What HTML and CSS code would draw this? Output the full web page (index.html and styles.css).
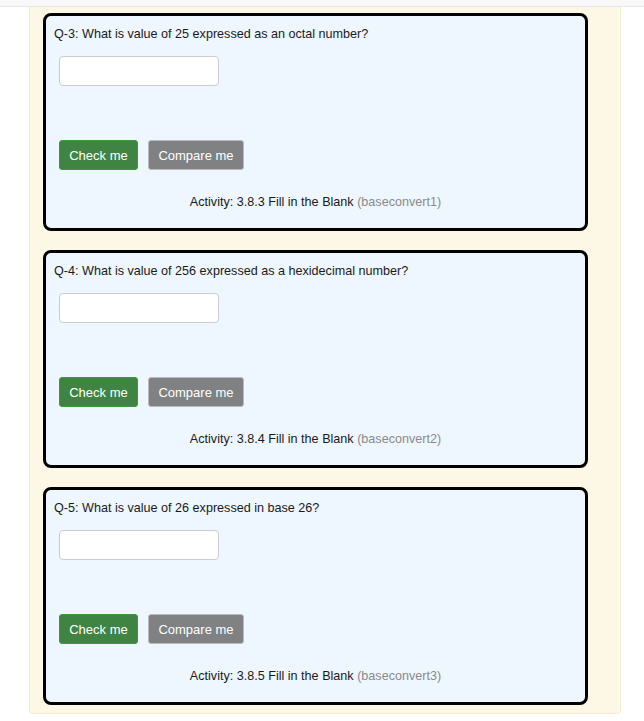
FILE: index.html
```html
<!DOCTYPE html>
<html>
<head>
<meta charset="utf-8">
<link rel="stylesheet" href="styles.css">
</head>
<body>
<div class="topbar"></div>
<div class="container">
  <div class="card">
    <p class="question">Q-3: What is value of 25 expressed as an octal number?</p>
    <input class="blank" type="text">
    <div class="feedback"></div>
    <div class="buttons">
      <button class="btn btn-check">Check me</button>
      <button class="btn btn-compare">Compare me</button>
    </div>
    <p class="activity">Activity: 3.8.3 Fill in the Blank <span class="id">(baseconvert1)</span></p>
  </div>
  <div class="card">
    <p class="question">Q-4: What is value of 256 expressed as a hexidecimal number?</p>
    <input class="blank" type="text">
    <div class="feedback"></div>
    <div class="buttons">
      <button class="btn btn-check">Check me</button>
      <button class="btn btn-compare">Compare me</button>
    </div>
    <p class="activity">Activity: 3.8.4 Fill in the Blank <span class="id">(baseconvert2)</span></p>
  </div>
  <div class="card last">
    <p class="question">Q-5: What is value of 26 expressed in base 26?</p>
    <input class="blank" type="text">
    <div class="feedback"></div>
    <div class="buttons">
      <button class="btn btn-check">Check me</button>
      <button class="btn btn-compare">Compare me</button>
    </div>
    <p class="activity">Activity: 3.8.5 Fill in the Blank <span class="id">(baseconvert3)</span></p>
  </div>
</div>
</body>
</html>
```
FILE: styles.css
```css
html, body {
  margin: 0;
  padding: 0;
  background: #ffffff;
  font-family: "Liberation Sans", Arial, sans-serif;
  color: #1a1a1a;
}
.topbar {
  height: 6px;
  background: #f8f8f8;
  border-bottom: 1px solid #e7e7e7;
}
.container {
  margin-left: 29px;
  width: 545px;
  padding: 6px 32px 8px 13px;
  background: #fdf8e6;
  border: 1px solid #f7ecd0;
  border-top: none;
  border-radius: 0 0 4px 4px;
}
.card {
  box-sizing: border-box;
  height: 218px;
  border: 3px solid #000;
  border-radius: 8px;
  background: #eef6ff;
  padding: 10px 8px 16px 8px;
  margin-bottom: 19px;
  display: flex;
  flex-direction: column;
  align-items: flex-start;
}
.card.last {
  margin-bottom: 0;
}
.question {
  margin: 0;
  font-size: 12.6px;
  line-height: 17px;
}
.blank {
  box-sizing: border-box;
  width: 160px;
  height: 30px;
  margin: 13px 0 0 5px;
  border: 1px solid #cccccc;
  border-radius: 4px;
  background: #ffffff;
  padding: 0 8px;
}
.feedback {
  height: 54px;
}
.buttons {
  display: flex;
  gap: 10px;
  margin-left: 5px;
}
.btn {
  box-sizing: border-box;
  height: 30px;
  padding: 0;
  font-family: "Liberation Sans", Arial, sans-serif;
  font-size: 13px;
  white-space: nowrap;
  color: #ffffff;
  border-radius: 3px;
  cursor: pointer;
}
.btn-check {
  width: 79px;
  background: #3f8442;
  border: 1px solid #3b9a40;
}
.btn-compare {
  width: 96px;
  background: #7f8183;
  border: 1px solid #b9bbbd;
}
.activity {
  align-self: stretch;
  margin: 24px 0 0 0;
  font-size: 12.6px;
  line-height: 17px;
  text-align: center;
}
.id {
  color: #8a8a8a;
}
```
